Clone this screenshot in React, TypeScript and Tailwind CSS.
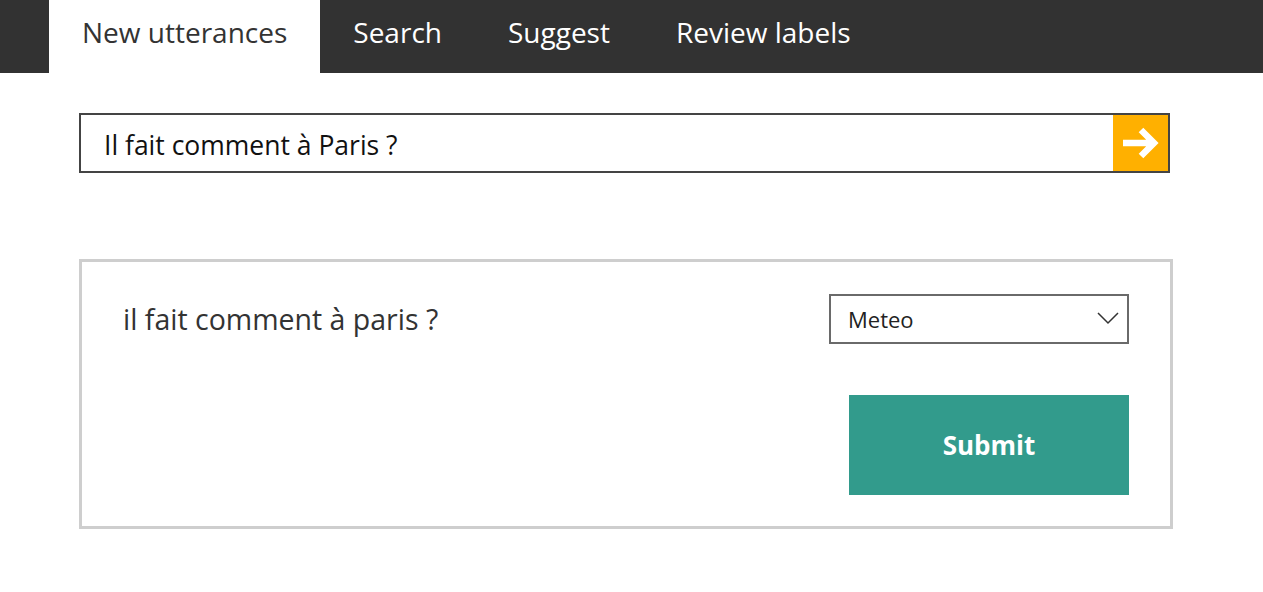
import React, { useState } from 'react';

const tabs = ['New utterances', 'Search', 'Suggest', 'Review labels'];

export default function App() {
  const [active, setActive] = useState(0);
  const [query, setQuery] = useState('Il fait comment à Paris ?');
  const [label, setLabel] = useState('Meteo');

  return (
    <div className="min-h-screen bg-white font-['Open_Sans',sans-serif] text-[#222]">
      {/* Top navigation */}
      <nav className="flex h-[73px] bg-[#323232] pl-[49px]">
        {tabs.map((t, i) => (
          <button
            key={t}
            onClick={() => setActive(i)}
            className={
              i === active
                ? 'h-full bg-white px-[33px] pb-[10px] text-[28px] text-[#333]'
                : 'h-full px-[33px] pb-[10px] text-[28px] text-white'
            }
          >
            {t}
          </button>
        ))}
      </nav>

      <main className="px-[79px] pt-[40px]">
        {/* Search box */}
        <div className="flex h-[60px] w-[1091px] border-2 border-[#444]">
          <input
            value={query}
            onChange={e => setQuery(e.target.value)}
            className="flex-1 px-[23px] pt-[6px] text-[26.5px] text-[#111] outline-none"
          />
          <button className="flex w-[55px] items-center justify-center bg-[#ffb000]">
            <svg width="40" height="34" viewBox="0 0 40 34" fill="none">
              <path d="M2 17h31M20 4l13 13-13 13" stroke="white" strokeWidth="6.5" strokeLinecap="butt" strokeLinejoin="miter" />
            </svg>
          </button>
        </div>

        {/* Utterance card */}
        <div className="mt-[86px] w-[1094px] border-[3px] border-[#cecece] px-[41px] pt-[32px] pb-[31px]">
          <div className="flex items-center justify-between">
            <span className="text-[28.5px] text-[#333]">il fait comment à paris ?</span>
            <div className="relative h-[50px] w-[300px] border-2 border-[#6a6a6a]">
              <select
                value={label}
                onChange={e => setLabel(e.target.value)}
                className="h-full w-full appearance-none bg-white pl-[17px] text-[22px] text-[#222] outline-none"
              >
                <option>Meteo</option>
                <option>Transport</option>
                <option>Autre</option>
              </select>
              <svg className="pointer-events-none absolute right-[8px] top-[15px]" width="22" height="14" viewBox="0 0 22 14" fill="none">
                <path d="M1 2l10 10L21 2" stroke="#333" strokeWidth="1.5" />
              </svg>
            </div>
          </div>
          <div className="mt-[51px] flex justify-end">
            <button className="h-[100px] w-[280px] bg-[#329b8c] text-[26px] font-bold text-white">Submit</button>
          </div>
        </div>
      </main>
    </div>
  );
}
